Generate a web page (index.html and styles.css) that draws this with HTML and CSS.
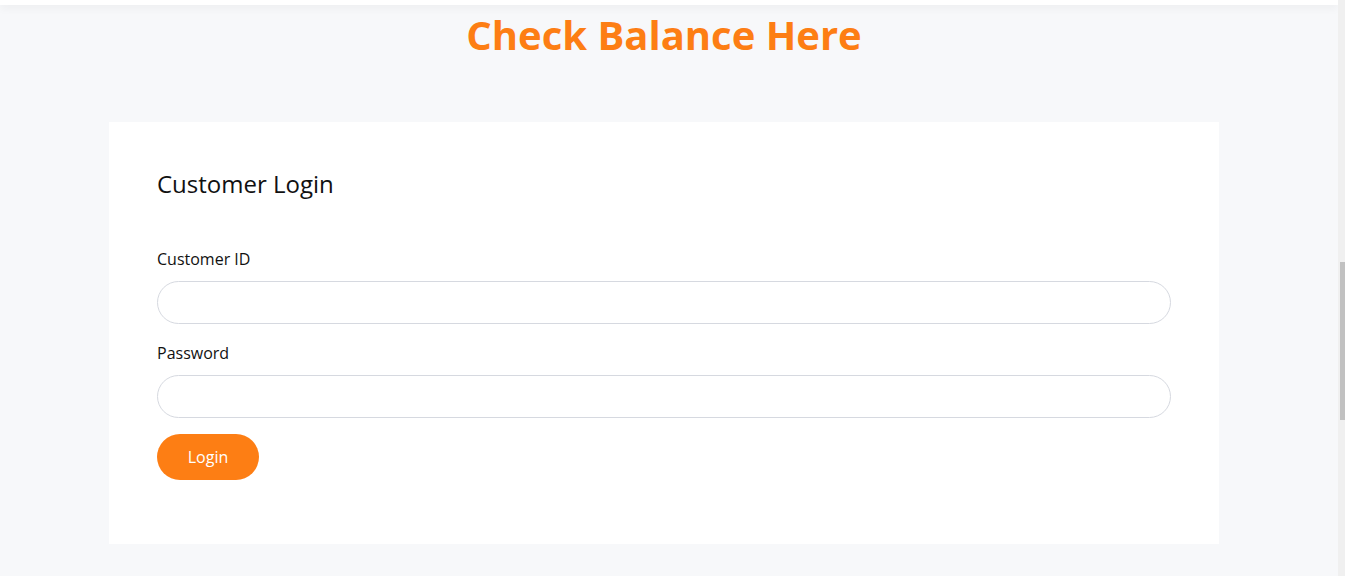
FILE: index.html
```html
<!DOCTYPE html>
<html lang="en">
<head>
<meta charset="utf-8">
<title>Check Balance Here</title>
<link rel="stylesheet" href="styles.css">
</head>
<body>
<div class="page">
  <div class="main">
    <div class="header"></div>
    <h1 class="title">Check Balance Here</h1>
    <div class="container">
      <div class="card">
        <h2 class="card-title">Customer Login</h2>
        <form class="form">
          <label class="label" for="cid">Customer ID</label>
          <input class="input" id="cid" type="text">
          <label class="label" for="pwd">Password</label>
          <input class="input input-last" id="pwd" type="password">
          <button class="btn" type="button">Login</button>
        </form>
      </div>
    </div>
  </div>
  <div class="scrollbar"><div class="thumb"></div></div>
</div>
</body>
</html>
```
FILE: styles.css
```css
* { box-sizing: border-box; }
html, body { margin: 0; padding: 0; height: 100%; overflow: hidden; }
body {
  font-family: "Open Sans", "Noto Sans", sans-serif;
  background: #f7f8fa;
  color: #111;
}
.page { display: flex; height: 576px; }
.main { flex: 1; display: flex; flex-direction: column; padding-right: 10px; }
.header {
  height: 5px;
  background: #fff;
  margin-right: -10px;
  box-shadow: 0 2px 10px rgba(0,0,0,0.07);
}
.title {
  margin: 6px 0 0;
  text-align: center;
  font-size: 40px;
  font-weight: 700;
  line-height: 48px;
  color: #fd7e14;
}
.container { width: 1110px; margin: 63px auto 0; }
.card {
  background: #fff;
  padding: 44px 48px 64px;
}
.card-title {
  margin: 0 0 45px;
  font-size: 24px;
  font-weight: 400;
  line-height: 36px;
  color: #111;
}
.form { display: flex; flex-direction: column; align-items: flex-start; }
.label {
  font-size: 16px;
  line-height: 24px;
  margin-bottom: 10px;
  color: #111;
}
.input {
  width: 100%;
  height: 43px;
  border: 1px solid #d6d9e0;
  border-radius: 22px;
  background: #fff;
  margin-bottom: 17px;
  padding: 0 20px;
  font: inherit;
}
.input-last { margin-bottom: 16px; }
.btn {
  width: 102px;
  height: 46px;
  border: none;
  border-radius: 23px;
  background: #fd7e14;
  color: #fff;
  font-family: inherit;
  font-size: 16px;
}
.scrollbar { width: 7px; background: #f0f0f0; padding-top: 262px; }
.thumb { width: 5px; margin-left: 2px; height: 158px; background: #c1c1c1; }
```
